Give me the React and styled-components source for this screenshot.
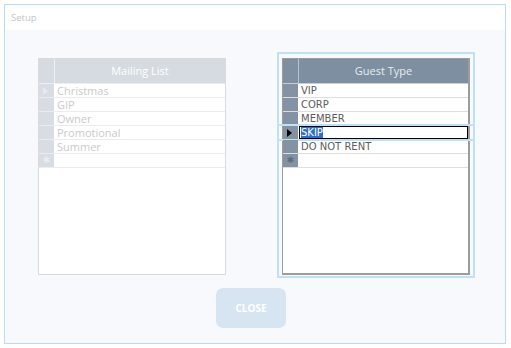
import React from "react";
import styled, { createGlobalStyle } from "styled-components";

const Global = createGlobalStyle`
  html, body { margin: 0; padding: 0; background: #ffffff; }
  body { font-family: "Open Sans", "DejaVu Sans", sans-serif; }
`;

const Frame = styled.div`
  margin: 4px 0 0 4px;
  width: 502px;
  height: 340px;
  box-sizing: border-box;
  border: 1px solid #b8dcf5;
  display: flex;
  flex-direction: column;
  background: #f7f9fd;
`;

const TitleBar = styled.div`
  height: 25px;
  background: #ffffff;
  padding-left: 6px;
  font-size: 9.5px;
  line-height: 25px;
  color: #bfc3c7;
`;

const Body = styled.div`
  flex: 1;
  display: flex;
  flex-direction: column;
`;

const PanelsRow = styled.div`
  display: flex;
  gap: 46px;
  padding: 22px 0 0 28px;
`;

const Panel = styled.div`
  width: 198px;
  height: 226px;
  box-sizing: border-box;
  border: 2px solid ${(p) => (p.$focused ? "#bfe1f6" : "transparent")};
  padding: 4px 3px 0 3px;
`;

const Grid = styled.div`
  width: 188px;
  height: 217px;
  box-sizing: border-box;
  background: #ffffff;
  border: 1px solid ${(p) => (p.$active ? "#9c9c9c" : "#dadada")};
  border-right-width: ${(p) => (p.$active ? "2px" : "1px")};
  border-bottom-width: ${(p) => (p.$active ? "2px" : "1px")};
  display: flex;
  flex-direction: column;
`;

const HeaderRow = styled.div`
  display: grid;
  grid-template-columns: 15px 1fr;
  column-gap: 1px;
  height: 25px;
  box-sizing: border-box;
  border-bottom: 1px solid ${(p) => (p.$active ? "#c8ced4" : "#eceff2")};
  background: ${(p) => (p.$active ? "#b9c3cc" : "#eef0f3")};
`;

const HeaderCorner = styled.div`
  background: ${(p) => (p.$active ? "#7d8fa0" : "#d5dbe1")};
`;

const HeaderCell = styled.div`
  background: ${(p) => (p.$active ? "#7d8fa0" : "#d5dbe1")};
  color: ${(p) => (p.$active ? "#e9edf0" : "#ffffff")};
  font-size: 11px;
  line-height: 24px;
  text-align: center;
`;

const Row = styled.div`
  position: relative;
  display: grid;
  grid-template-columns: 15px 1fr;
  column-gap: 1px;
  height: 14px;
  box-sizing: border-box;
  border-bottom: 1px solid ${(p) => (p.$active ? "#dedede" : "#ececec")};
`;

const RowFocus = styled.div`
  position: absolute;
  left: -6px;
  right: -6px;
  top: -2px;
  bottom: -2px;
  border-top: 2px solid #bfe1f6;
  border-bottom: 2px solid #bfe1f6;
  pointer-events: none;
`;

const RowHead = styled.div`
  background: ${(p) => (p.$active ? "#8393a3" : "#d8dde3")};
  display: flex;
  align-items: center;
  justify-content: center;
  position: relative;
`;

const Arrow = styled.span`
  width: 0;
  height: 0;
  border-top: 4px solid transparent;
  border-bottom: 4px solid transparent;
  border-left: 5px solid ${(p) => (p.$active ? "#000000" : "#e6e9ed")};
  margin-left: -2px;
`;

const Star = styled.span`
  font-family: "DejaVu Sans", sans-serif;
  font-size: 9px;
  line-height: 13px;
  color: ${(p) => (p.$active ? "#5e6c7a" : "#e9ecef")};
`;

const Cell = styled.div`
  font-family: ${(p) => (p.$active ? '"DejaVu Sans", sans-serif' : '"Open Sans", sans-serif')};
  font-size: ${(p) => (p.$active ? "10px" : "11px")};
  line-height: 13px;
  padding-left: 2px;
  color: ${(p) => (p.$active ? "#5c5c5c" : "#cacaca")};
  white-space: nowrap;
  overflow: hidden;
  box-sizing: border-box;
  ${(p) => (p.$editing ? "border: 1px solid #000; padding-left: 1px; line-height: 11px;" : "")}
`;

const Selected = styled.span`
  background: #2f70c6;
  color: #ffffff;
`;

const Footer = styled.div`
  display: flex;
  padding: 10px 0 0 211px;
`;

const CloseButton = styled.button`
  width: 70px;
  height: 40px;
  border: none;
  border-radius: 7px;
  background: #d6e5f1;
  color: #ffffff;
  font-family: "Open Sans", sans-serif;
  font-weight: 700;
  font-size: 10px;
  padding: 0;
`;

function DataGrid({ title, items, active, current, editing }) {
  return (
    <Grid $active={active}>
      <HeaderRow $active={active}>
        <HeaderCorner $active={active} />
        <HeaderCell $active={active}>{title}</HeaderCell>
      </HeaderRow>
      {items.map((item, i) => (
        <Row key={item} $active={active}>
          {editing && i === current && <RowFocus />}
          <RowHead $active={active}>{i === current && <Arrow $active={active} />}</RowHead>
          <Cell $active={active} $editing={editing && i === current}>
            {editing && i === current ? <Selected>{item}</Selected> : item}
          </Cell>
        </Row>
      ))}
      <Row $active={active}>
        <RowHead $active={active}>
          <Star $active={active}>✱</Star>
        </RowHead>
        <Cell $active={active} />
      </Row>
    </Grid>
  );
}

export default function App() {
  return (
    <>
      <Global />
      <Frame>
        <TitleBar>Setup</TitleBar>
        <Body>
          <PanelsRow>
            <Panel>
              <DataGrid
                title="Mailing List"
                items={["Christmas", "GIP", "Owner", "Promotional", "Summer"]}
                current={0}
              />
            </Panel>
            <Panel $focused>
              <DataGrid
                title="Guest Type"
                items={["VIP", "CORP", "MEMBER", "SKIP", "DO NOT RENT"]}
                active
                current={3}
                editing
              />
            </Panel>
          </PanelsRow>
          <Footer>
            <CloseButton>CLOSE</CloseButton>
          </Footer>
        </Body>
      </Frame>
    </>
  );
}
